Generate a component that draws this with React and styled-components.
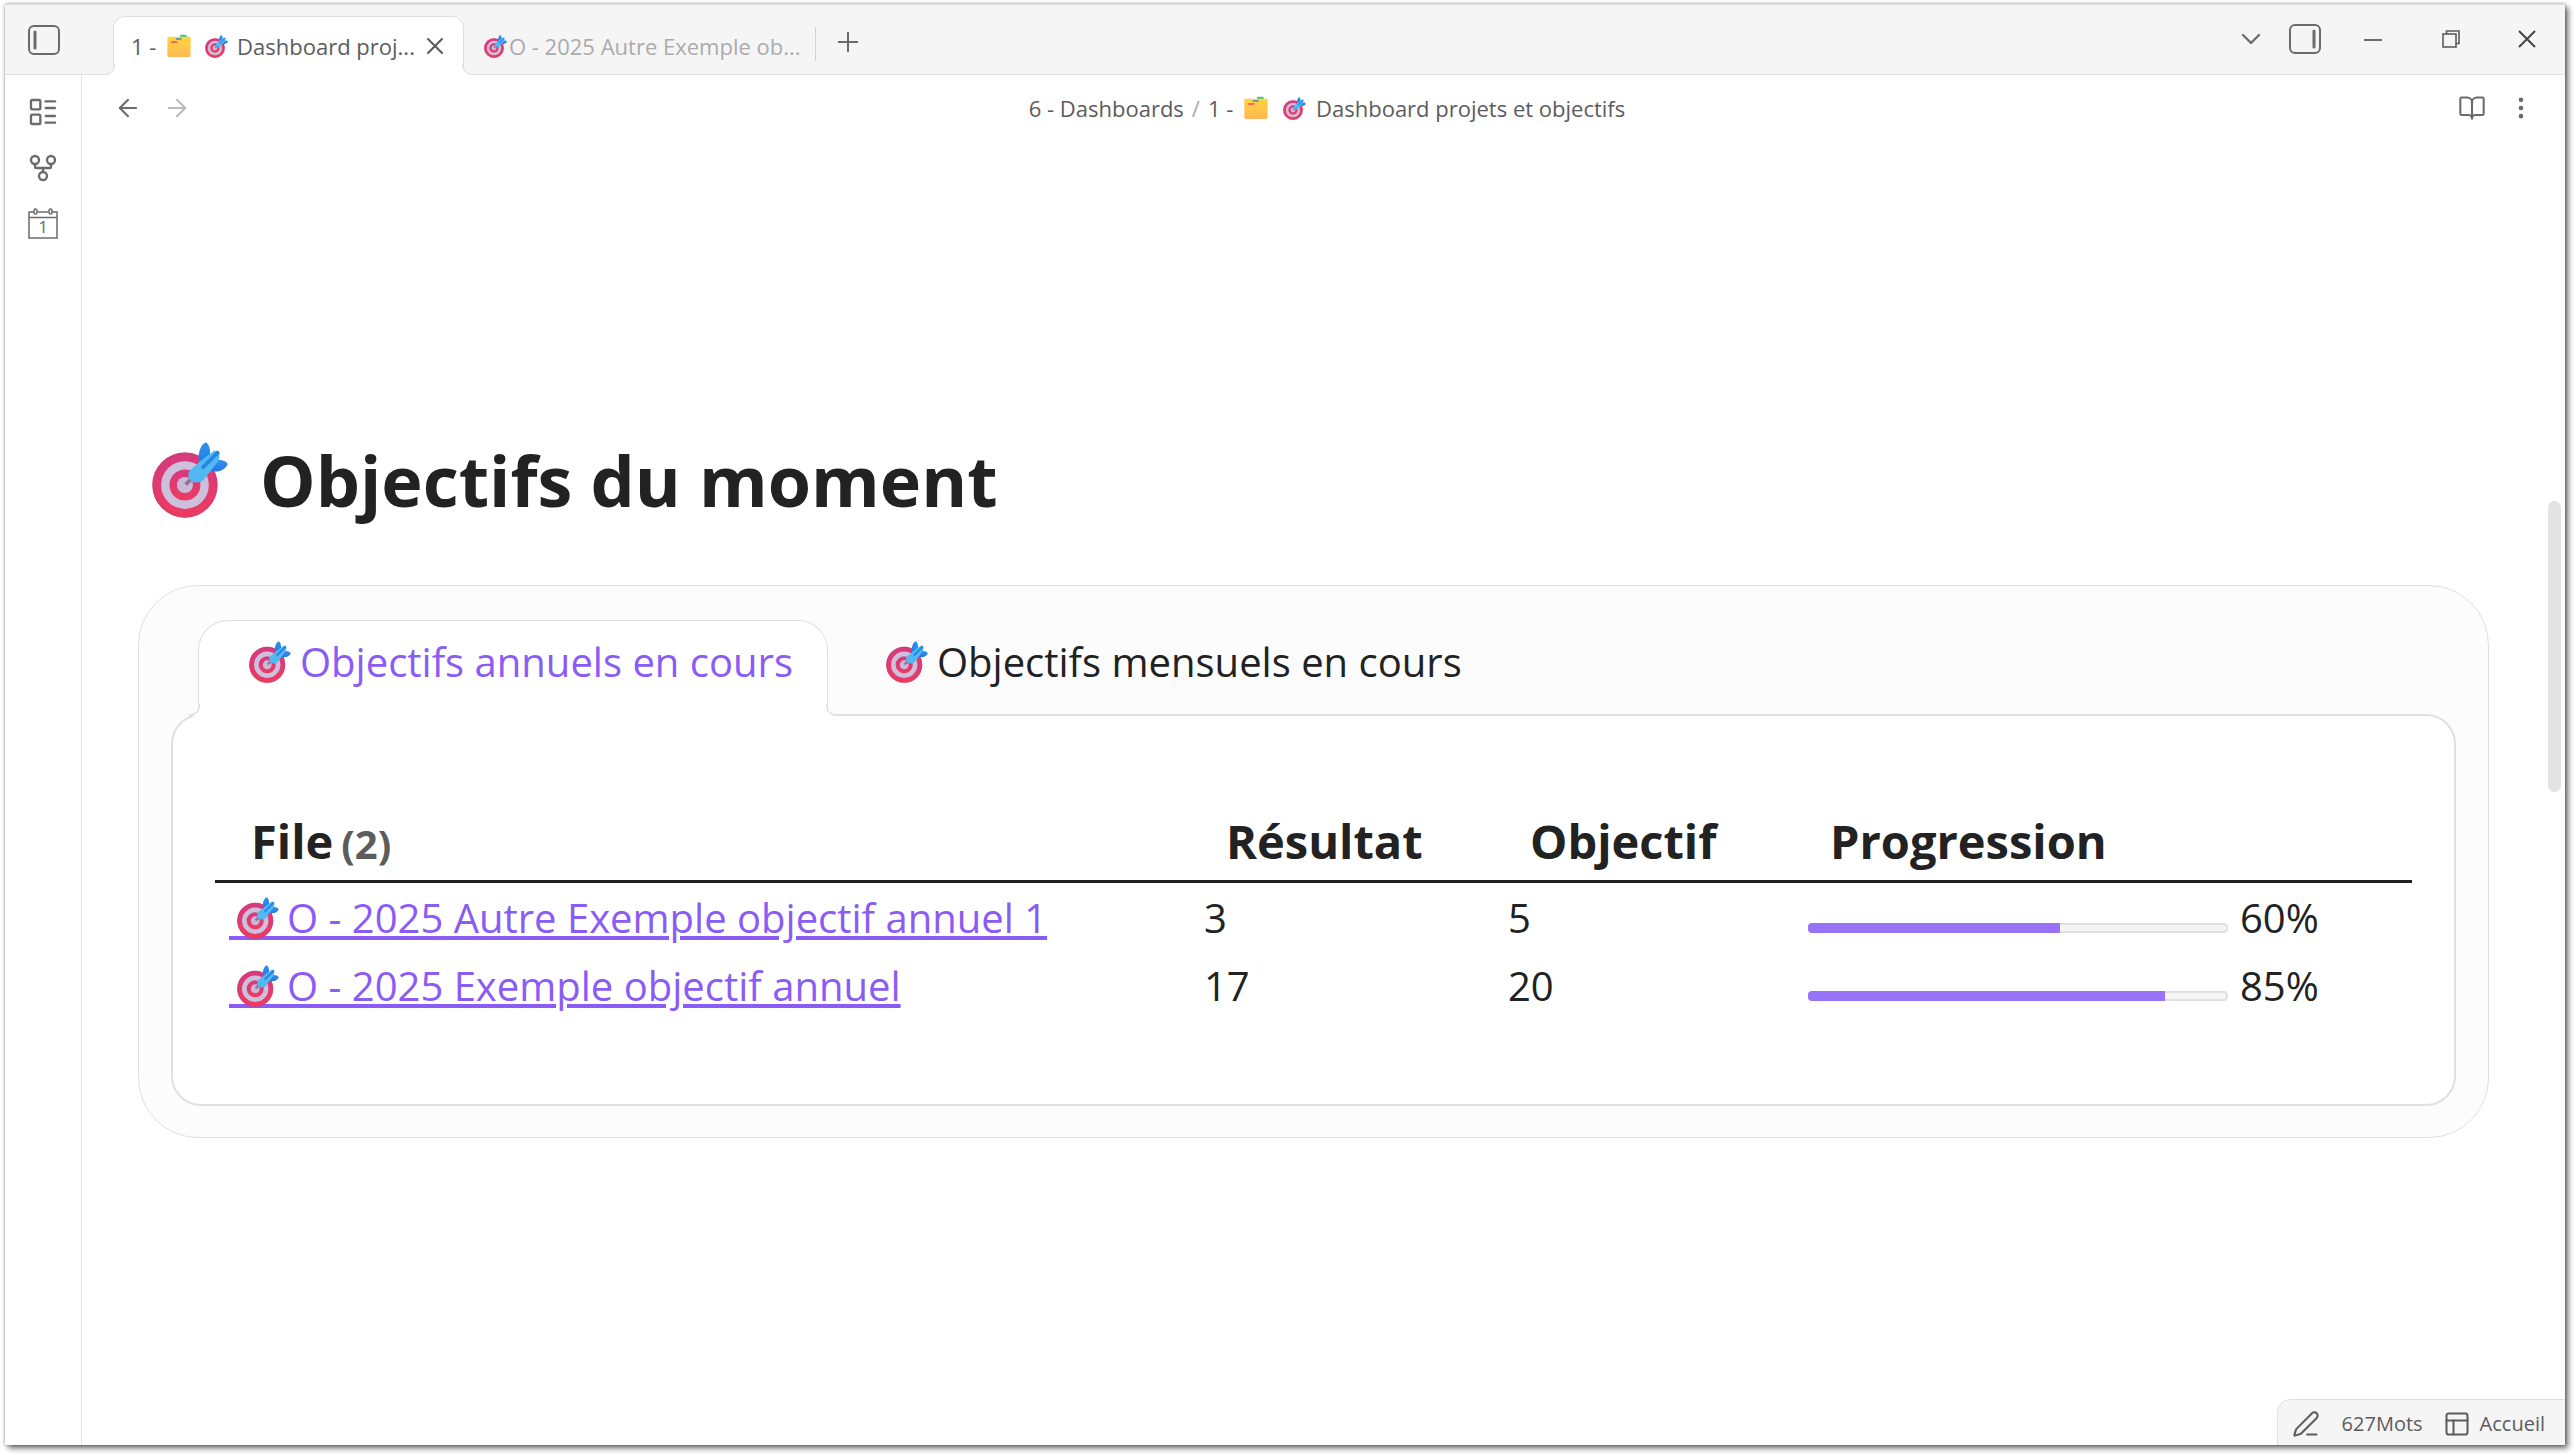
import React, { useState } from 'react';
import styled, { createGlobalStyle } from 'styled-components';
import {
  ArrowLeft,
  ArrowRight,
  BookOpen,
  ChevronDown,
  EllipsisVertical,
  GitFork,
  LayoutList,
  PanelsTopLeft,
  PenLine,
  Plus,
  X,
} from 'lucide-react';

const GlobalStyle = createGlobalStyle`
  * {
    box-sizing: border-box;
  }

  body {
    margin: 0;
    background: #fff;
    color: #222;
    font-family: 'Open Sans', 'Noto Sans', sans-serif;
  }

  button {
    font: inherit;
    color: inherit;
    background: none;
    border: 0;
    padding: 0;
    cursor: pointer;
  }
`;

const Desktop = styled.div`
  height: 100vh;
  padding: 4px 9px 10px 5px;
`;

const AppWindow = styled.div`
  position: relative;
  display: flex;
  flex-direction: column;
  height: 100%;
  background: #fff;
  box-shadow: 0 0 3px rgba(0, 0, 0, 0.3), 3px 3px 6px rgba(0, 0, 0, 0.6);
`;

const TitleBar = styled.header`
  display: flex;
  height: 71px;
  background: #f5f5f5;
  border-top: 1px solid #e0e0e0;
  border-bottom: 1px solid #e0e0e0;
  color: #6b6b6b;
`;

const IconButton = styled.button`
  display: flex;
  align-items: center;
  justify-content: center;
  flex: none;
  width: ${(props) => props.$width || 48}px;
  height: ${(props) => props.$height || 48}px;
  color: ${(props) => props.$color || '#6b6b6b'};

  svg {
    display: block;
  }
`;

const FileTabs = styled.nav`
  display: flex;
  flex: 1;
  min-width: 0;
  padding: 11px 0 0 31px;
`;

const FileTab = styled.div`
  position: relative;
  display: flex;
  align-items: center;
  flex: 0 1 351px;
  min-width: 0;
  margin-bottom: -1px;
  padding: 0 14px 0 17px;
  border: 1px solid ${(props) => (props.$active ? '#e0e0e0' : 'transparent')};
  border-bottom: 0;
  border-radius: 12px 12px 0 0;
  background: ${(props) => (props.$active ? '#fff' : 'transparent')};
  color: ${(props) => (props.$active ? '#5c5c5c' : '#ababab')};

  &::before,
  &::after {
    content: ${(props) => (props.$active ? "''" : 'none')};
    position: absolute;
    bottom: 0;
    width: 10px;
    height: 10px;
    border: solid #e0e0e0;
  }

  &::before {
    left: -10px;
    border-width: 0 1px 1px 0;
    border-bottom-right-radius: 10px;
    box-shadow: 4px 4px 0 #fff;
  }

  &::after {
    right: -10px;
    border-width: 0 0 1px 1px;
    border-bottom-left-radius: 10px;
    box-shadow: -4px 4px 0 #fff;
  }
`;

const FileTabTitle = styled.button`
  display: flex;
  align-items: center;
  flex: 1;
  min-width: 0;
  font-size: 22px;
  line-height: 28px;
  white-space: pre;
`;

const TabDivider = styled.span`
  width: 1px;
  height: 34px;
  margin-top: 11px;
  background: #d4d4d4;
`;

const WindowControls = styled.div`
  display: flex;
  align-items: center;
  flex: none;
  padding-bottom: 2px;
`;

const Body = styled.div`
  display: flex;
  flex: 1;
  min-height: 0;
`;

const Ribbon = styled.aside`
  display: flex;
  flex-direction: column;
  align-items: center;
  flex: none;
  width: 77px;
  padding-top: 9px;
  border-right: 1px solid #e0e0e0;
`;

const Leaf = styled.div`
  display: flex;
  flex-direction: column;
  flex: 1;
  min-width: 0;
`;

const ViewHeader = styled.div`
  display: flex;
  align-items: center;
  height: 66px;
  padding: 0 20px 0 21px;
`;

const Breadcrumbs = styled.div`
  display: flex;
  align-items: center;
  justify-content: center;
  flex: 1;
  padding-left: 6px;
  color: #5c5c5c;
  font-size: 22px;
  line-height: 28px;
  white-space: pre;

  a {
    color: inherit;
    text-decoration: none;
  }
`;

const Slash = styled.span`
  margin: 0 8px;
  color: #ababab;
`;

const Scroller = styled.div`
  display: flex;
  flex: 1;
  min-height: 0;
`;

const Note = styled.main`
  flex: 1;
  min-width: 0;
  overflow: hidden;
  padding: 289px 59px 0 56px;
`;

const ScrollTrack = styled.div`
  flex: none;
  width: 17px;
  padding-top: 360px;
`;

const ScrollThumb = styled.div`
  width: 13px;
  height: 291px;
  border-radius: 7px;
  background: #e3e3e3;
`;

const Emoji = styled.svg`
  display: inline-block;
  flex: none;
  width: ${(props) => props.$size}px;
  height: ${(props) => props.$size}px;
  margin: 0 ${(props) => props.$gap || 0}px;
`;

const Heading = styled.h1`
  display: flex;
  align-items: center;
  gap: 32px;
  margin: 0 0 55px;
  padding-left: 14px;
  font-size: 70px;
  line-height: 100px;
  font-weight: 700;
`;

const Card = styled.section`
  padding: 34px 32px 31px;
  border: 1px solid #e0e0e0;
  border-radius: 60px;
  background: #fcfcfc;
`;

const TabList = styled.div`
  display: flex;
  gap: 7px;
  padding-left: 27px;
`;

const Tab = styled.button`
  position: relative;
  display: flex;
  align-items: center;
  gap: 9px;
  height: 96px;
  margin-bottom: -2px;
  padding: 0 34px 14px 50px;
  border: 1px solid ${(props) => (props.$active ? '#e0e0e0' : 'transparent')};
  border-bottom: 0;
  border-radius: 30px 30px 0 0;
  background: ${(props) => (props.$active ? '#fff' : 'transparent')};
  color: ${(props) => (props.$active ? '#8a5cf5' : '#222')};
  font-size: 40px;
  line-height: 56px;
  white-space: nowrap;

  &::before,
  &::after {
    content: ${(props) => (props.$active ? "''" : 'none')};
    position: absolute;
    bottom: 0;
    width: 10px;
    height: 10px;
    border: solid #e0e0e0;
  }

  &::before {
    left: -10px;
    border-width: 0 1px 2px 0;
    border-bottom-right-radius: 10px;
    box-shadow: 4px 4px 0 #fff;
  }

  &::after {
    right: -10px;
    border-width: 0 0 2px 1px;
    border-bottom-left-radius: 10px;
    box-shadow: -4px 4px 0 #fff;
  }
`;

const Panel = styled.div`
  padding: 89px 42px 85px;
  border: 2px solid #e0e0e0;
  border-radius: 30px;
  background: #fff;
`;

const Table = styled.table`
  width: 100%;
  border-collapse: collapse;
  table-layout: fixed;
  font-size: 40px;
  line-height: 56px;
`;

const HeadCell = styled.th`
  width: ${(props) => (props.$width ? `${props.$width}px` : 'auto')};
  padding: 8px 0 11px 36px;
  border-bottom: 3px solid #222;
  font-size: 47px;
  line-height: 56px;
  font-weight: 700;
  text-align: left;
`;

const Count = styled.span`
  margin-left: 8px;
  color: #5c5c5c;
  font-size: 40px;
  line-height: 40px;
`;

const Cell = styled.td`
  padding: 7px 0 5px 14px;
  white-space: nowrap;
`;

const NoteLink = styled.a`
  color: #8a5cf5;
  text-decoration: underline;
  text-decoration-thickness: 4px;
  text-underline-offset: 3px;
  white-space: pre;
`;

/* carries the underline on below the emoji */
const LinkIcon = styled.span`
  display: inline-flex;
  align-items: flex-start;
  height: 43px;
  border-bottom: 4px solid #8a5cf5;
  vertical-align: -6px;
`;

const Progress = styled.progress`
  appearance: none;
  width: 420px;
  height: 10px;
  margin-right: 12px;
  border: 0;
  border-radius: 4px;
  overflow: hidden;
  vertical-align: baseline;

  &::-webkit-progress-bar {
    background: #f5f5f5;
    border-radius: 4px;
    box-shadow: inset 0 0 0 2px #e0e0e0;
  }

  &::-webkit-progress-value {
    background: #9873f7;
  }
`;

const StatusBar = styled.footer`
  position: absolute;
  right: 0;
  bottom: 0;
  display: flex;
  align-items: center;
  height: 46px;
  padding: 2px 20px 0 14px;
  border: solid #e0e0e0;
  border-width: 1px 0 0 1px;
  border-top-left-radius: 14px;
  background: #f5f5f5;
  color: #5c5c5c;
  font-size: 20px;
  line-height: 28px;
`;

const StatusItem = styled.button`
  display: flex;
  align-items: center;
  gap: 9px;
  margin-right: ${(props) => props.$after || 0}px;
`;

const Target = ({ size, gap }) => (
  <Emoji $size={size} $gap={gap} viewBox="21 38 226 226" role="img" aria-label="Objectif">
    <defs>
      <linearGradient id="targetRed" x1="0" y1="0" x2="0" y2="1">
        <stop offset="0" stopColor="#d63a80" />
        <stop offset="1" stopColor="#ee3a60" />
      </linearGradient>
      <linearGradient id="dartFin" x1="0" y1="0" x2="0" y2="1">
        <stop offset="0" stopColor="#2f93ec" />
        <stop offset="1" stopColor="#2676e8" />
      </linearGradient>
    </defs>
    <circle cx="119" cy="166" r="97" fill="url(#targetRed)" />
    <circle cx="119" cy="166" r="94" fill="none" stroke="#cf4072" strokeWidth="6" opacity="0.6" />
    <circle cx="119" cy="166" r="71" fill="#cdc0dc" />
    <circle cx="119" cy="166" r="46" fill="url(#targetRed)" />
    <circle cx="119" cy="166" r="24" fill="#c9b9d6" />
    <path d="M121 164L145 142" stroke="#8b7795" strokeWidth="12" />
    <path d="M160 92C157 68 168 44 181 39C192 45 196 64 192 84L164 108Z" fill="url(#dartFin)" />
    <path d="M202 96L216 92C230 90 243 96 246 104C238 122 214 132 193 122L184 112Z" fill="url(#dartFin)" />
    <path
      d="M207 66C214 61 224 66 222 75L220 92L176 149C165 163 141 161 132 147C125 134 131 123 141 115Z"
      fill="#52b8f1"
    />
    <path d="M216 70L173 113" stroke="#2b82e6" strokeWidth="11" strokeLinecap="round" />
    <path d="M207 66L160 102" stroke="#3fc5f5" strokeWidth="5" strokeLinecap="round" />
  </Emoji>
);

const Folder = ({ size, gap }) => (
  <Emoji $size={size} $gap={gap} viewBox="0 0 72 68" role="img" aria-label="Dossier">
    <defs>
      <linearGradient id="folderYellow" x1="0" y1="0" x2="0" y2="1">
        <stop offset="0" stopColor="#ffd43f" />
        <stop offset="1" stopColor="#ffb955" />
      </linearGradient>
    </defs>
    <rect x="39" y="0" width="20" height="10" rx="3" fill="#44c97c" />
    <path d="M1 9C1 7 2 6 5 6H67C70 6 71 7 71 10V62C71 66 69 67 66 67H6C3 67 1 66 1 62Z" fill="url(#folderYellow)" />
    <path d="M28 13H42" stroke="#3d86e0" strokeWidth="4" strokeLinecap="round" />
    <path d="M14 22H30" stroke="#f9485c" strokeWidth="4" strokeLinecap="round" />
    <path d="M34 22C37 22 37 17 41 17H70" stroke="#f5c332" strokeWidth="2" fill="none" />
  </Emoji>
);

const SidebarIcon = ({ right }) => (
  <svg width="32" height="30" viewBox="0 0 32 30" fill="none" stroke="currentColor" strokeWidth="2" strokeLinecap="round">
    <rect x="1" y="1" width="30" height="28" rx="5" />
    <path d={right ? 'M25 7V23' : 'M7 7V23'} strokeWidth="3" />
  </svg>
);

const CalendarIcon = () => (
  <svg width="30" height="32" viewBox="0 0 30 32" fill="none" stroke="currentColor" strokeWidth="1.5">
    <path d="M6 4H1V30H29V4H24M9.500 4H20.500M1 9.500H29" />
    <rect x="6" y="1" width="3" height="5" rx="1.500" />
    <rect x="21" y="1" width="3" height="5" rx="1.500" />
    <text x="15" y="25" fontSize="17" textAnchor="middle" fill="currentColor" stroke="none">
      1
    </text>
  </svg>
);

const MinimizeIcon = () => (
  <svg width="18" height="18" viewBox="0 0 18 18" stroke="currentColor" strokeWidth="2">
    <path d="M0 10H18" />
  </svg>
);

const RestoreIcon = () => (
  <svg width="18" height="18" viewBox="0 0 18 18" fill="none" stroke="currentColor" strokeWidth="1.600">
    <rect x="1" y="4" width="13" height="13" />
    <path d="M4.500 4V1H17V13.500H14" />
  </svg>
);

const CloseIcon = () => (
  <svg width="18" height="18" viewBox="0 0 18 18" stroke="currentColor" strokeWidth="2">
    <path d="M1 1L17 17M17 1L1 17" />
  </svg>
);

const objectifs = [
  { name: 'O - 2025 Autre Exemple objectif annuel 1', resultat: 3, objectif: 5 },
  { name: 'O - 2025 Exemple objectif annuel', resultat: 17, objectif: 20 },
];

const tabs = ['Objectifs annuels en cours', 'Objectifs mensuels en cours'];

const ObjectifRow = ({ name, resultat, objectif }) => {
  const percent = Math.round((resultat / objectif) * 100);

  return (
    <tr>
      <Cell>
        <NoteLink href="#">
          <LinkIcon>
            <Target size={42} gap={8} />
          </LinkIcon>
          {name}
        </NoteLink>
      </Cell>
      <Cell>{resultat}</Cell>
      <Cell>{objectif}</Cell>
      <Cell>
        <Progress value={resultat} max={objectif} aria-label={name} />
        {percent}%
      </Cell>
    </tr>
  );
};

const App = () => {
  const [activeTab, setActiveTab] = useState(0);

  return (
    <Desktop>
      <GlobalStyle />
      <AppWindow>
        <TitleBar>
          <IconButton $width={77} $height={69} aria-label="Volet gauche">
            <SidebarIcon />
          </IconButton>
          <FileTabs>
            <FileTab $active>
              <FileTabTitle>
                {'1 - '}
                <Folder size={24} gap={5} />
                <Target size={23} gap={9} />
                Dashboard proj...
              </FileTabTitle>
              <IconButton $width={28} $height={28} $color="#5c5c5c" aria-label="Fermer l'onglet">
                <X size={28} strokeWidth={1.75} />
              </IconButton>
            </FileTab>
            <FileTab>
              <FileTabTitle>
                <Target size={23} gap={2} />
                O - 2025 Autre Exemple ob...
              </FileTabTitle>
            </FileTab>
            <TabDivider />
            <IconButton $width={64} $height={52} aria-label="Nouvel onglet">
              <Plus size={32} strokeWidth={1.5} />
            </IconButton>
          </FileTabs>
          <WindowControls>
            <IconButton $width={54} aria-label="Liste des onglets">
              <ChevronDown size={32} strokeWidth={1.75} />
            </IconButton>
            <IconButton $width={54} aria-label="Volet droit">
              <SidebarIcon right />
            </IconButton>
            <IconButton $width={82} aria-label="Réduire">
              <MinimizeIcon />
            </IconButton>
            <IconButton $width={74} $color="#5c5c5c" aria-label="Restaurer">
              <RestoreIcon />
            </IconButton>
            <IconButton $width={77} $color="#444" aria-label="Fermer">
              <CloseIcon />
            </IconButton>
          </WindowControls>
        </TitleBar>

        <Body>
          <Ribbon>
            <IconButton $height={56} aria-label="Sélecteur rapide">
              <LayoutList size={32} strokeWidth={1.75} />
            </IconButton>
            <IconButton $height={56} aria-label="Vue graphique">
              <GitFork size={32} strokeWidth={1.75} />
            </IconButton>
            <IconButton $height={56} aria-label="Note du jour">
              <CalendarIcon />
            </IconButton>
          </Ribbon>

          <Leaf>
            <ViewHeader>
              <IconButton $width={49} aria-label="Précédent">
                <ArrowLeft size={28} strokeWidth={1.75} />
              </IconButton>
              <IconButton $width={49} $color="#bababa" aria-label="Suivant">
                <ArrowRight size={28} strokeWidth={1.75} />
              </IconButton>
              <Breadcrumbs>
                <a href="#">6 - Dashboards</a>
                <Slash>/</Slash>
                {'1 - '}
                <Folder size={24} gap={5} />
                <Target size={23} gap={10} />
                Dashboard projets et objectifs
              </Breadcrumbs>
              <IconButton $width={49} aria-label="Mode lecture">
                <BookOpen size={28} strokeWidth={1.75} />
              </IconButton>
              <IconButton $width={49} aria-label="Plus d'options">
                <EllipsisVertical size={28} />
              </IconButton>
            </ViewHeader>

            <Scroller>
              <Note>
                <Heading>
                  <Target size={76} />
                  Objectifs du moment
                </Heading>

                <Card>
                  <TabList role="tablist">
                    {tabs.map((label, index) => (
                      <Tab
                        key={label}
                        role="tab"
                        aria-selected={index === activeTab}
                        $active={index === activeTab}
                        onClick={() => setActiveTab(index)}
                      >
                        <Target size={42} />
                        {label}
                      </Tab>
                    ))}
                  </TabList>
                  <Panel role="tabpanel">
                    <Table>
                      <thead>
                        <tr>
                          <HeadCell>
                            File<Count>({objectifs.length})</Count>
                          </HeadCell>
                          <HeadCell $width={304}>Résultat</HeadCell>
                          <HeadCell $width={300}>Objectif</HeadCell>
                          <HeadCell $width={618}>Progression</HeadCell>
                        </tr>
                      </thead>
                      <tbody>
                        {objectifs.map((row) => (
                          <ObjectifRow key={row.name} {...row} />
                        ))}
                      </tbody>
                    </Table>
                  </Panel>
                </Card>
              </Note>
              <ScrollTrack>
                <ScrollThumb />
              </ScrollTrack>
            </Scroller>
          </Leaf>
        </Body>

        <StatusBar>
          <StatusItem $after={22} aria-label="Mode édition">
            <PenLine size={28} strokeWidth={1.75} />
          </StatusItem>
          <StatusItem $after={20}>627Mots</StatusItem>
          <StatusItem>
            <PanelsTopLeft size={28} strokeWidth={1.75} />
            Accueil
          </StatusItem>
        </StatusBar>
      </AppWindow>
    </Desktop>
  );
};

export default App;
